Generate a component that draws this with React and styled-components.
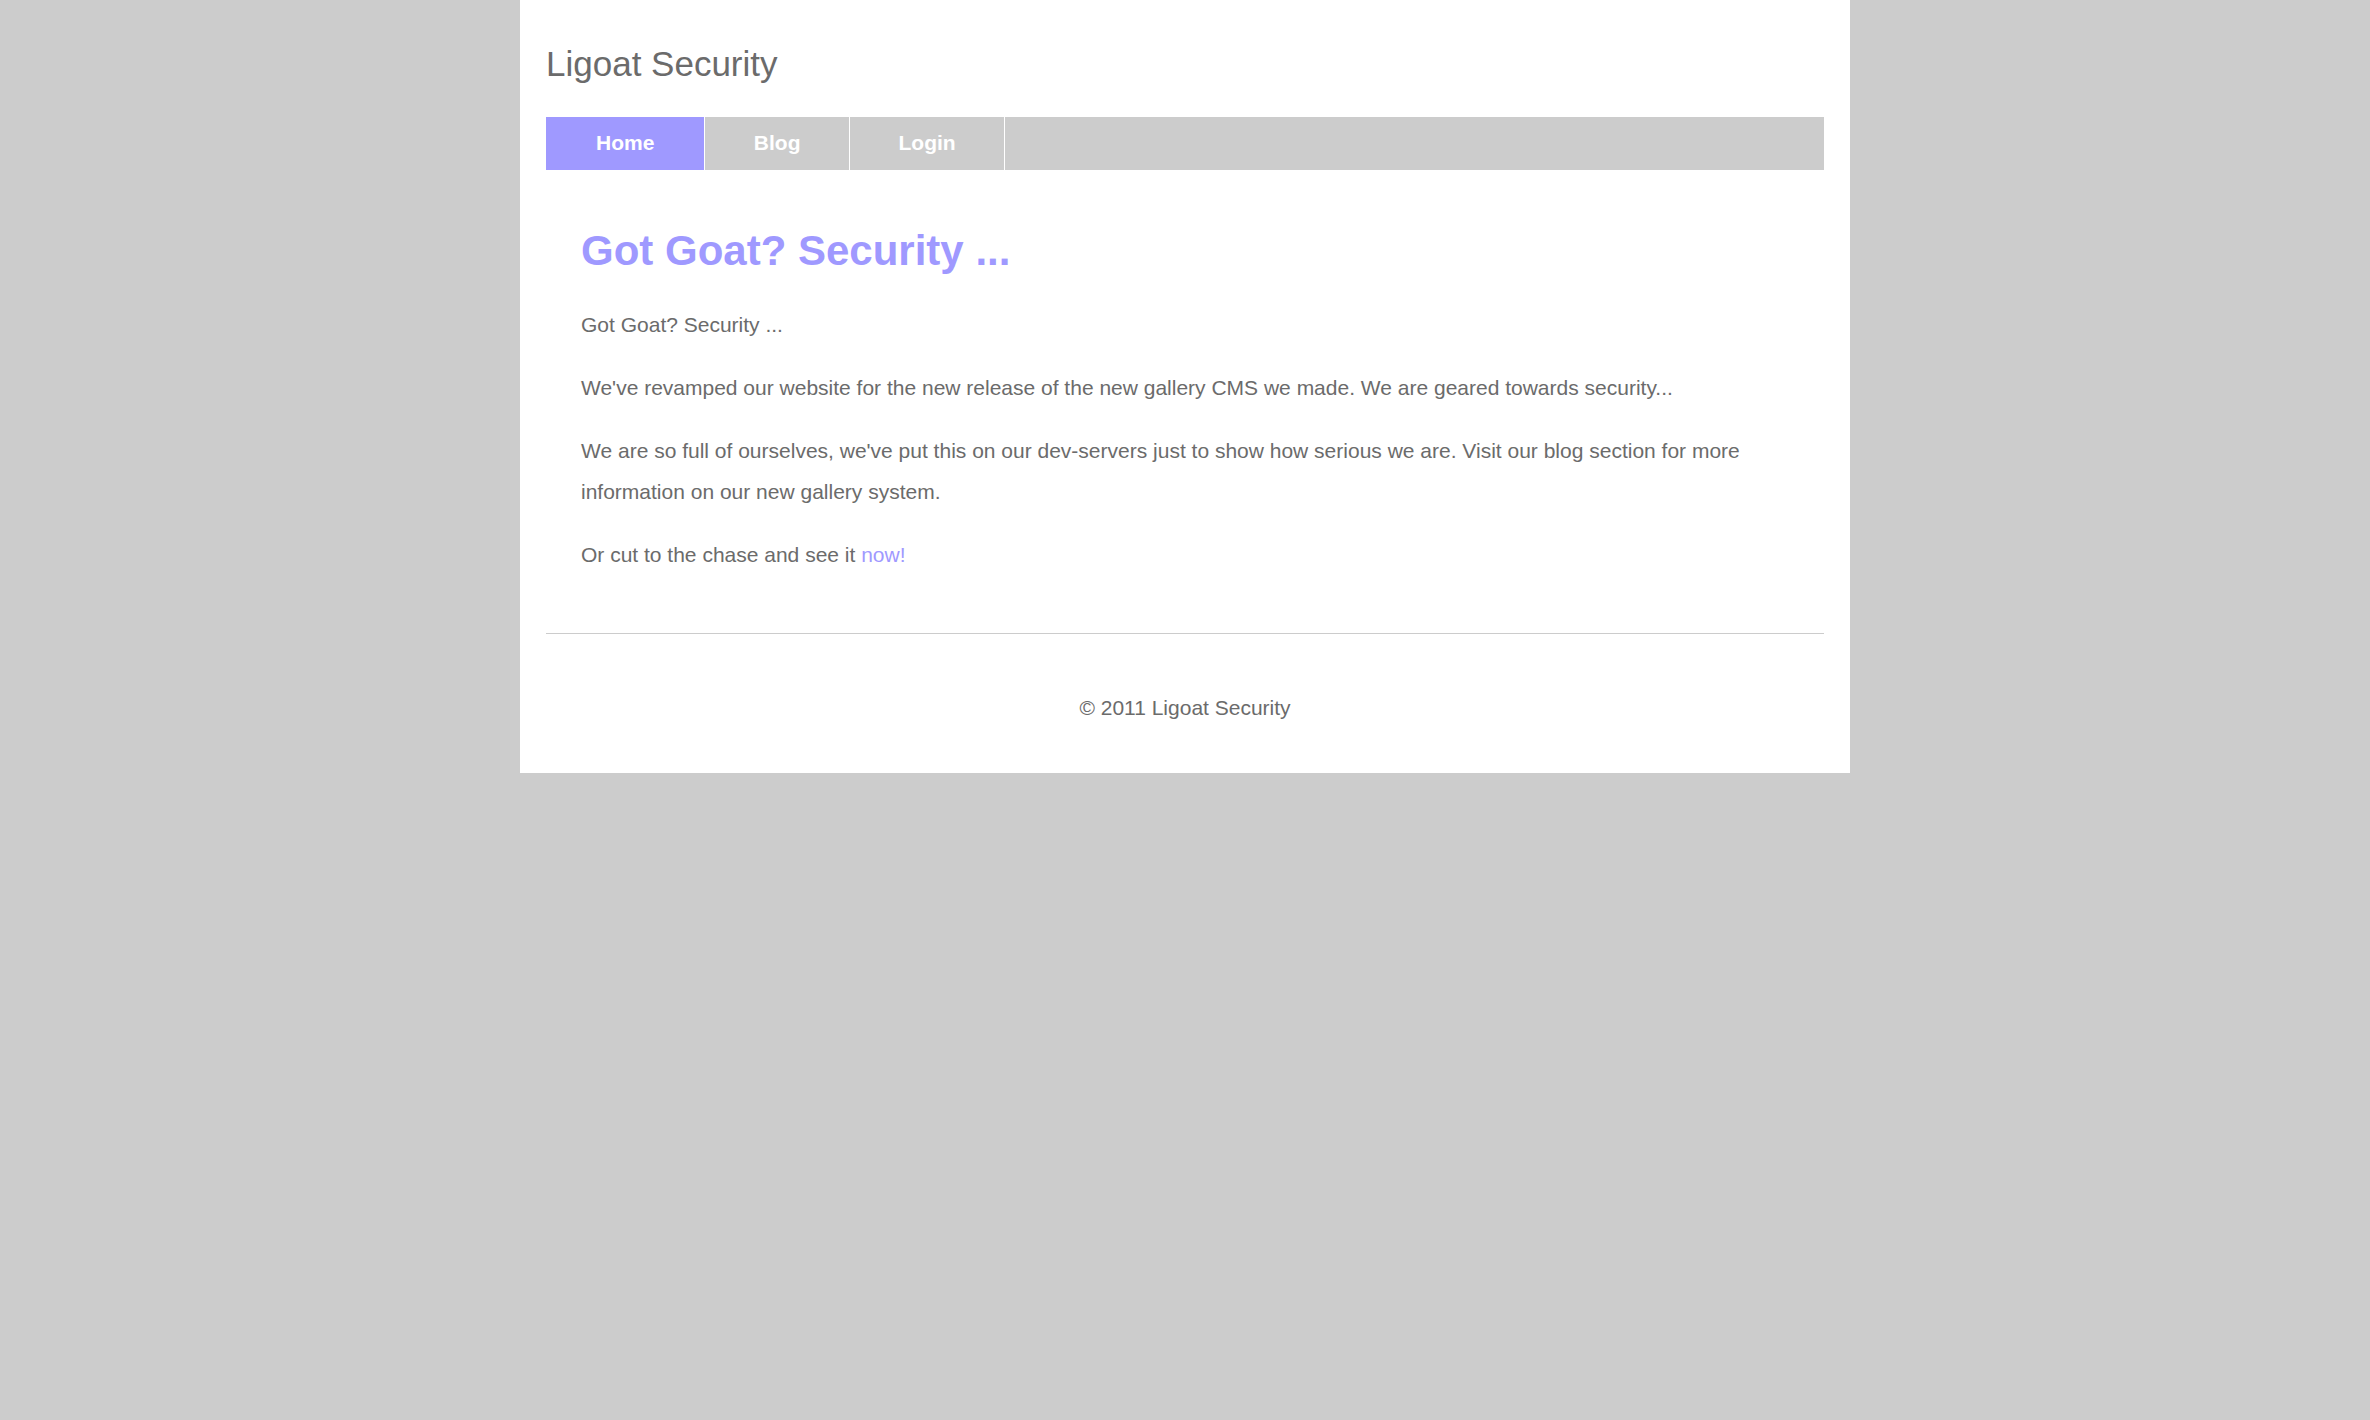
import React from "react";
import styled, { createGlobalStyle } from "styled-components";

const GlobalStyle = createGlobalStyle`
  html, body {
    margin: 0;
    padding: 0;
    background-color: #cccccc;
  }
  body {
    font-family: "Liberation Sans", Arial, sans-serif;
    color: #6b6b6b;
  }
`;

const Page = styled.div`
  width: 1330px;
  margin: 0 auto;
  padding: 0 26px 53px;
  box-sizing: border-box;
  background-color: #ffffff;
`;

const SiteTitle = styled.h1`
  margin: 0;
  padding-top: 44px;
  font-size: 35px;
  font-weight: normal;
  line-height: normal;
  color: #6b6b6b;
`;

const Nav = styled.ul`
  display: flex;
  margin: 33px 0 0;
  padding: 0;
  list-style: none;
  height: 53px;
  background-color: #cccccc;
`;

const NavItem = styled.li`
  border-right: 1.5px solid #ffffff;
`;

const NavLink = styled.a`
  display: block;
  padding: 0 ${(p) => p.$pad}px;
  height: 53px;
  line-height: 51px;
  font-size: 21px;
  font-weight: bold;
  color: #ffffff;
  text-decoration: none;
  background-color: ${(p) => (p.$active ? "#9f99ff" : "transparent")};
  cursor: pointer;
`;

const Main = styled.div`
  padding: 57px 35px 36px;
`;

const Heading = styled.h2`
  margin: 0 0 29px;
  font-size: 42px;
  font-weight: bold;
  line-height: normal;
  color: #9f99ff;
`;

const Para = styled.p`
  margin: 0 0 22px;
  font-size: 21px;
  line-height: 41px;
`;

const Link = styled.a`
  color: #9f99ff;
  text-decoration: none;
`;

const Footer = styled.div`
  border-top: 1px solid #cccccc;
  padding-top: 62px;
  text-align: center;
  font-size: 21px;
  line-height: 24px;
`;

const navItems = [
  { label: "Home", active: true, pad: 50 },
  { label: "Blog", pad: 48.5 },
  { label: "Login", pad: 48.5 },
];

export default function App() {
  return (
    <>
      <GlobalStyle />
      <Page>
        <SiteTitle>Ligoat Security</SiteTitle>
        <Nav>
          {navItems.map((item) => (
            <NavItem key={item.label}>
              <NavLink $active={item.active} $pad={item.pad}>
                {item.label}
              </NavLink>
            </NavItem>
          ))}
        </Nav>
        <Main>
          <Heading>Got Goat? Security ...</Heading>
          <Para>Got Goat? Security ...</Para>
          <Para>
            We've revamped our website for the new release of the new gallery
            CMS we made. We are geared towards security...
          </Para>
          <Para>
            We are so full of ourselves, we've put this on our dev-servers just
            to show how serious we are. Visit our blog section for more
            information on our new gallery system.
          </Para>
          <Para>
            Or cut to the chase and see it <Link>now!</Link>
          </Para>
        </Main>
        <Footer>© 2011 Ligoat Security</Footer>
      </Page>
    </>
  );
}
